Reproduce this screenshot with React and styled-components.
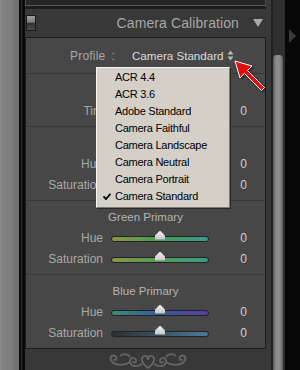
import styled, { createGlobalStyle } from 'styled-components'

const Global = createGlobalStyle`
  html, body {
    margin: 0;
    padding: 0;
    background: #000;
  }
  body {
    font-family: "Liberation Sans", Arial, sans-serif;
  }
`

const Frame = styled.div`
  position: relative;
  width: 300px;
  height: 370px;
  display: flex;
  overflow: hidden;
  background: #070707;
`

const LeftStrip = styled.div`
  width: 19px;
  background: linear-gradient(to right, #958b8a 0, #858383 2px, #7f7f7f 55%, #6d6d6d 100%);
`

const Gutter = styled.div`
  width: 6px;
  background: linear-gradient(to right, #0a0a0a 0 2px, #2c2c2c 2px 3px, #0a0a0a 3px);
`

const Panel = styled.div`
  width: 246px;
  display: flex;
  flex-direction: column;
  background: #383838;
`

const PrevBox = styled.div`
  height: 5px;
  margin-right: 5px;
  background: #262626;
  border-left: 1px solid #4a4a4a;
  border-right: 1px solid #4a4a4a;
  border-bottom: 1px solid #5a5a5a;
  box-shadow: 0 3px 0 #1e1e1e;
`

const Header = styled.div`
  height: 28px;
  margin-top: 3px;
  display: flex;
  align-items: center;
  padding: 0 8px 0 1px;
`

const Toggle = styled.div`
  width: 8px;
  height: 14px;
  border: 1px solid #1a1a1a;
  background: linear-gradient(to bottom, #a0a0a0 0, #7a7a7a 45%, #333 50%, #4a4a4a 100%);
`

const Title = styled.div`
  margin-left: auto;
  font-size: 14px;
  color: #a6a6a6;
  letter-spacing: 0.1px;
`

const Caret = styled.div`
  margin-left: 14px;
  width: 0;
  height: 0;
  border-left: 5px solid transparent;
  border-right: 5px solid transparent;
  border-top: 8px solid #a9a9a9;
`

const Box = styled.div`
  position: relative;
  margin-right: 5px;
  border: 1px solid #1c1c1c;
  background: #474747;
`

const ProfileRow = styled.div`
  height: 35px;
  display: flex;
  align-items: center;
  padding-left: 44px;
  font-size: 12px;
  letter-spacing: 0.2px;
  color: #a8a8a8;
  border-bottom: 1px solid #393939;
`

const Colon = styled.span`
  margin-left: 6px;
`

const ProfileValue = styled.span`
  margin-left: 17px;
  font-size: 11.6px;
  letter-spacing: 0;
  color: #dcdcdc;
  display: flex;
  align-items: center;
  gap: 4px;
`

const Section = styled.div`
  padding: 7px 0 5px;
  border-bottom: ${(p) => (p.last ? 'none' : '1px solid #393939')};
`

const SectionTitle = styled.div`
  height: 19px;
  line-height: 19px;
  text-align: center;
  font-size: 11.5px;
  color: #b4b4b4;
`

const Row = styled.div`
  height: 21px;
  display: grid;
  grid-template-columns: 77px 98px 1fr;
  column-gap: 8px;
  align-items: center;
  font-size: 12px;
`

const Label = styled.div`
  text-align: right;
  color: #a9a9a9;
`

const Value = styled.div`
  text-align: right;
  padding-right: 18px;
  color: #cfcfcf;
`

const Track = styled.div`
  position: relative;
  height: 4px;
  border: 1px solid #232323;
  border-radius: 3px;
  background: linear-gradient(to right, ${(p) => p.from}, ${(p) => p.mid}, ${(p) => p.to});
  margin-top: 2px;

  &::before {
    content: '';
    position: absolute;
    left: 6px;
    right: 6px;
    top: -5px;
    height: 1px;
    background: repeating-linear-gradient(to right, #5a5a5a 0 1px, transparent 1px 9px);
  }
`

const Thumb = styled.div`
  position: absolute;
  left: 43px;
  top: -6px;
  width: 10px;
  height: 9px;
  background: linear-gradient(to bottom, #f2f2f2, #c2c2c2);
  clip-path: polygon(50% 0, 100% 55%, 100% 100%, 0 100%, 0 55%);
`

const Footer = styled.div`
  flex: 1;
  display: flex;
  justify-content: center;
  padding-top: 3px;
`

const ScrollCol = styled.div`
  width: 13px;
  display: flex;
  flex-direction: column;
  padding: 55px 1px 0 2px;
  box-sizing: border-box;
  background: linear-gradient(to right, #222 0 2px, #2f2f2f 2px);
`

const ScrollThumb = styled.div`
  flex: 1;
  border-radius: 4px 4px 0 0;
  background: linear-gradient(to right, #555 0, #8c8c8c 30%, #8a8a8a 70%, #5a5a5a 100%);
`

const RightDark = styled.div`
  width: 16px;
  background: #080808;
  border-left: 1px solid #2a2a2a;
  padding: 29px 0 0 4px;
  box-sizing: border-box;
`

const SideArrow = styled.div`
  width: 0;
  height: 0;
  border-top: 7px solid transparent;
  border-bottom: 7px solid transparent;
  border-left: 7px solid #3a3a3a;
`

const Menu = styled.div`
  position: absolute;
  left: 70px;
  top: 29px;
  width: 132px;
  padding: 1px 0 2px;
  background: #d4d0c8;
  border: 1px solid;
  border-color: #f4f4f4 #7a7a7a #7a7a7a #f4f4f4;
  box-shadow: 1px 1px 0 #2a2a2a;
  z-index: 2;
`

const Item = styled.div`
  height: 17px;
  line-height: 17px;
  display: grid;
  grid-template-columns: 18px 1fr;
  font-size: 11px;
  letter-spacing: -0.25px;
  color: #000;
`

const Check = styled.span`
  display: flex;
  align-items: center;
  justify-content: center;
  padding-left: 2px;
`

const Overlay = styled.svg`
  position: absolute;
  left: 0;
  top: 0;
  pointer-events: none;
  z-index: 5;
`

function Slider({ colors }) {
  return (
    <Track from={colors[0]} mid={colors[1]} to={colors[2]}>
      <Thumb />
    </Track>
  )
}

function SliderRow({ label, colors }) {
  return (
    <Row>
      <Label>{label}</Label>
      <Slider colors={colors} />
      <Value>0</Value>
    </Row>
  )
}

const sections = [
  { title: 'Shadows', rows: [{ label: 'Tint', colors: ['#4e8a4e', '#6a6a6a', '#9a4a8a'] }] },
  {
    title: 'Red Primary',
    rows: [
      { label: 'Hue', colors: ['#9a3a6a', '#a03a3a', '#a06a3a'] },
      { label: 'Saturation', colors: ['#4a4a4a', '#7a4a4a', '#a03a3a'] },
    ],
  },
  {
    title: 'Green Primary',
    rows: [
      { label: 'Hue', colors: ['#8a9640', '#4a9a5a', '#3a9a8c'] },
      { label: 'Saturation', colors: ['#8a9648', '#54985a', '#3a9a86'] },
    ],
  },
  {
    title: 'Blue Primary',
    rows: [
      { label: 'Hue', colors: ['#3a8a78', '#3a5a96', '#5a3c9a'] },
      { label: 'Saturation', colors: ['#2e2e2e', '#3a5466', '#4a7a9c'] },
    ],
  },
]

const profiles = [
  'ACR 4.4',
  'ACR 3.6',
  'Adobe Standard',
  'Camera Faithful',
  'Camera Landscape',
  'Camera Neutral',
  'Camera Portrait',
  'Camera Standard',
]

function UpDown() {
  return (
    <svg width="7" height="11" viewBox="0 0 7 11">
      <path d="M3.5 0.5 L6.5 4.5 L0.5 4.5 Z" fill="#b8b8b8" />
      <path d="M3.5 10.5 L6.5 6.5 L0.5 6.5 Z" fill="#b8b8b8" />
    </svg>
  )
}

function Ornament() {
  return (
    <svg width="84" height="18" viewBox="0 0 84 18" fill="none" stroke="#656565" strokeWidth="1.8">
      <path d="M42 16 C36 12 34 6 38 4 C41 3 42 6 42 8 C42 6 43 3 46 4 C50 6 48 12 42 16 Z" />
      <path d="M36 12 C30 16 24 14 24 9 C24 5 29 5 30 8 C31 11 27 12 27 9" />
      <path d="M48 12 C54 16 60 14 60 9 C60 5 55 5 54 8 C53 11 57 12 57 9" />
      <path d="M24 10 C18 14 8 14 5 8 C3 4 8 2 10 5 C12 8 8 9 8 7" />
      <path d="M60 10 C66 14 76 14 79 8 C81 4 76 2 74 5 C72 8 76 9 76 7" />
      <path d="M14 4 C18 1 22 2 24 5" />
      <path d="M70 4 C66 1 62 2 60 5" />
    </svg>
  )
}

export default function App() {
  return (
    <>
      <Global />
      <Frame>
        <LeftStrip />
        <Gutter />
        <Panel>
          <PrevBox />
          <Header>
            <Toggle />
            <Title>Camera Calibration</Title>
            <Caret />
          </Header>
          <Box>
            <ProfileRow>
              <span>Profile</span>
              <Colon>:</Colon>
              <ProfileValue>
                Camera Standard
                <UpDown />
              </ProfileValue>
            </ProfileRow>
            {sections.map((s, i) => (
              <Section key={s.title} last={i === sections.length - 1}>
                <SectionTitle>{s.title}</SectionTitle>
                {s.rows.map((r) => (
                  <SliderRow key={r.label} label={r.label} colors={r.colors} />
                ))}
              </Section>
            ))}
            <Menu>
              {profiles.map((p) => (
                <Item key={p}>
                  <Check>
                    {p === 'Camera Standard' && (
                      <svg width="8" height="7" viewBox="0 0 8 7">
                        <path d="M0.5 3.5 L3 6 L7.5 0.8" stroke="#000" strokeWidth="1.8" fill="none" />
                      </svg>
                    )}
                  </Check>
                  <span>{p}</span>
                </Item>
              ))}
            </Menu>
          </Box>
          <Footer>
            <Ornament />
          </Footer>
        </Panel>
        <ScrollCol>
          <ScrollThumb />
        </ScrollCol>
        <RightDark>
          <SideArrow />
        </RightDark>
        <Overlay width="300" height="370" viewBox="0 0 300 370">
          <polygon
            points="235,61 252,66 247.5,70.5 264.5,87.5 261.5,90.5 244.5,73.5 240,78"
            fill="#e30d0d"
            stroke="#fff"
            strokeWidth="1"
            strokeLinejoin="round"
            style={{ filter: 'drop-shadow(1px 1px 1px rgba(0,0,0,0.6))' }}
          />
        </Overlay>
      </Frame>
    </>
  )
}
